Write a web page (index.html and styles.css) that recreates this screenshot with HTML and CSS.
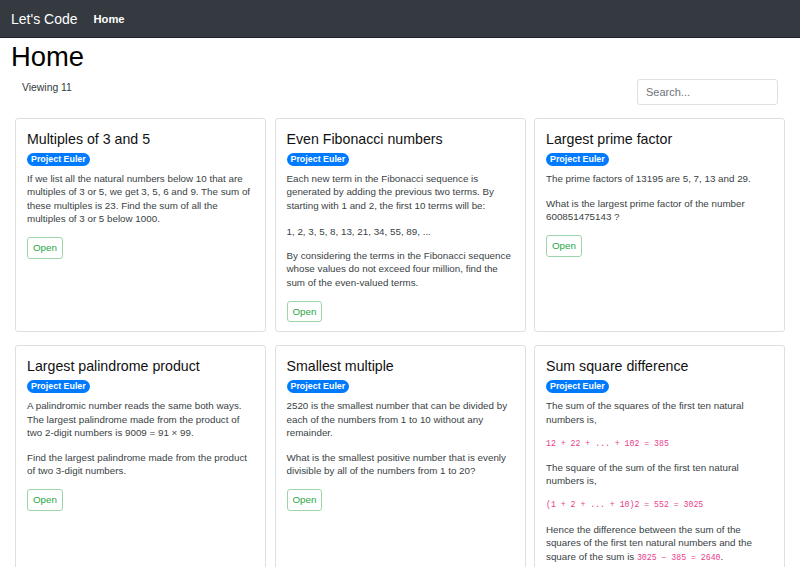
FILE: index.html
```html
<!DOCTYPE html>
<html lang="en">
<head>
<meta charset="utf-8">
<title>Let's Code</title>
<link rel="stylesheet" href="styles.css">
</head>
<body>
<nav class="navbar">
  <a class="brand" href="#">Let's Code</a>
  <a class="nav-link" href="#">Home</a>
</nav>
<main class="page">
  <h1 class="page-title">Home</h1>
  <div class="toolbar">
    <span class="count">Viewing 11</span>
    <input class="search" type="text" placeholder="Search...">
  </div>
  <div class="grid">
    <div class="card">
      <h5 class="card-title">Multiples of 3 and 5</h5>
      <span class="badge">Project Euler</span>
      <p>If we list all the natural numbers below 10 that are multiples of 3 or 5, we get 3, 5, 6 and 9. The sum of these multiples is 23. Find the sum of all the multiples of 3 or 5 below 1000.</p>
      <a class="btn" href="#">Open</a>
    </div>
    <div class="card">
      <h5 class="card-title">Even Fibonacci numbers</h5>
      <span class="badge">Project Euler</span>
      <p>Each new term in the Fibonacci sequence is generated by adding the previous two terms. By starting with 1 and 2, the first 10 terms will be:</p>
      <p class="seq">1, 2, 3, 5, 8, 13, 21, 34, 55, 89, ...</p>
      <p>By considering the terms in the Fibonacci sequence whose values do not exceed four million, find the sum of the even-valued terms.</p>
      <a class="btn" href="#">Open</a>
    </div>
    <div class="card">
      <h5 class="card-title">Largest prime factor</h5>
      <span class="badge">Project Euler</span>
      <p>The prime factors of 13195 are 5, 7, 13 and 29.</p>
      <p>What is the largest prime factor of the number 600851475143 ?</p>
      <a class="btn" href="#">Open</a>
    </div>
    <div class="card">
      <h5 class="card-title">Largest palindrome product</h5>
      <span class="badge">Project Euler</span>
      <p>A palindromic number reads the same both ways. The largest palindrome made from the product of two 2-digit numbers is 9009 = 91 × 99.</p>
      <p>Find the largest palindrome made from the product of two 3-digit numbers.</p>
      <a class="btn" href="#">Open</a>
    </div>
    <div class="card">
      <h5 class="card-title">Smallest multiple</h5>
      <span class="badge">Project Euler</span>
      <p>2520 is the smallest number that can be divided by each of the numbers from 1 to 10 without any remainder.</p>
      <p>What is the smallest positive number that is evenly divisible by all of the numbers from 1 to 20?</p>
      <a class="btn" href="#">Open</a>
    </div>
    <div class="card">
      <h5 class="card-title">Sum square difference</h5>
      <span class="badge">Project Euler</span>
      <p>The sum of the squares of the first ten natural numbers is,</p>
      <p class="code-line"><code>12 + 22 + ... + 102 = 385</code></p>
      <p>The square of the sum of the first ten natural numbers is,</p>
      <p class="code-line"><code>(1 + 2 + ... + 10)2 = 552 = 3025</code></p>
      <p>Hence the difference between the sum of the squares of the first ten natural numbers and the square of the sum is <code>3025 − 385 = 2640</code>.</p>
      <p>Find the difference between the sum of the squares of the first one hundred natural numbers and the square of the sum.</p>
      <a class="btn" href="#">Open</a>
    </div>
    <div class="card">
      <h5 class="card-title">10001st prime</h5>
      <span class="badge">Project Euler</span>
      <p>By listing the first six prime numbers: 2, 3, 5, 7, 11, and 13, we can see that the 6th prime is 13.</p>
      <p>What is the 10 001st prime number?</p>
      <a class="btn" href="#">Open</a>
    </div>
    <div class="card">
      <h5 class="card-title">Largest product in a series</h5>
      <span class="badge">Project Euler</span>
      <p>Find the thirteen adjacent digits in the 1000-digit number that have the greatest product. What is the value of this product?</p>
      <a class="btn" href="#">Open</a>
    </div>
    <div class="card">
      <h5 class="card-title">Special Pythagorean triplet</h5>
      <span class="badge">Project Euler</span>
      <p>There exists exactly one Pythagorean triplet for which a + b + c = 1000. Find the product abc.</p>
      <a class="btn" href="#">Open</a>
    </div>
    <div class="card">
      <h5 class="card-title">Summation of primes</h5>
      <span class="badge">Project Euler</span>
      <p>The sum of the primes below 10 is 2 + 3 + 5 + 7 = 17.</p>
      <p>Find the sum of all the primes below two million.</p>
      <a class="btn" href="#">Open</a>
    </div>
    <div class="card">
      <h5 class="card-title">Largest product in a grid</h5>
      <span class="badge">Project Euler</span>
      <p>What is the greatest product of four adjacent numbers in the same direction (up, down, left, right, or diagonally) in the 20×20 grid?</p>
      <a class="btn" href="#">Open</a>
    </div>
  </div>
</main>
</body>
</html>
```

FILE: styles.css
```css
* { box-sizing: border-box; }
body {
  margin: 0;
  font-family: "Liberation Sans", Arial, sans-serif;
  color: #212529;
  background: #fff;
}
.navbar {
  height: 38px;
  background: #343a40;
  border-bottom: 1px solid #1d2024;
  display: flex;
  align-items: center;
  padding: 0 11px;
  gap: 16px;
}
.navbar a { color: #fff; text-decoration: none; }
.brand { font-size: 14px; }
.nav-link { font-size: 11.2px; font-weight: 700; }
.page { padding: 0 15px; }
.page-title {
  margin: 2px 0 0 -4px;
  font-size: 27.4px;
  font-weight: 400;
  line-height: 34px;
  color: #000;
}
.toolbar {
  display: flex;
  justify-content: space-between;
  align-items: flex-start;
  padding: 0 7px;
  margin-top: 4px;
  height: 40px;
}
.count { font-size: 10.4px; line-height: 14px; color: #343a40; margin-top: 3px; }
.search {
  width: 141px;
  height: 26px;
  margin-top: 1px;
  border: 1px solid #dde1e5;
  border-radius: 3px;
  padding: 0 8px;
  font-family: inherit;
  font-size: 11px;
  color: #495057;
}
.search::placeholder { color: #6c757d; }
.grid {
  display: grid;
  grid-template-columns: repeat(3, 1fr);
  column-gap: 8.5px;
  row-gap: 13px;
}
.card {
  border: 1px solid #dfdfdf;
  border-radius: 3px;
  padding: 12px 11px 9px;
  display: flex;
  flex-direction: column;
  align-items: flex-start;
}
.card-title {
  margin: 0;
  font-size: 14.2px;
  font-weight: 400;
  line-height: 17px;
  color: #111;
}
.badge {
  margin: 5px 0 6px;
  background: #007bff;
  color: #fff;
  font-size: 8.9px;
  font-weight: 700;
  line-height: 13px;
  padding: 0 4px;
  border-radius: 7px;
}
.card p {
  margin: 0 0 11.6px;
  font-size: 9.8px;
  line-height: 13.4px;
  color: #3a3f44;
}
.card p.seq { margin-top: 1.5px; margin-bottom: 10px; }
.card .code-line { line-height: 9.4px; margin-bottom: 13px; }
code {
  font-family: "Liberation Mono", monospace;
  font-size: 8.2px;
  color: #e83e8c;
}
.btn {
  display: inline-block;
  font-size: 9.8px;
  line-height: 19.7px;
  padding: 0 5px;
  color: #28a745;
  border: 1px solid #9fd4ab;
  border-radius: 3px;
  text-decoration: none;
}
```
